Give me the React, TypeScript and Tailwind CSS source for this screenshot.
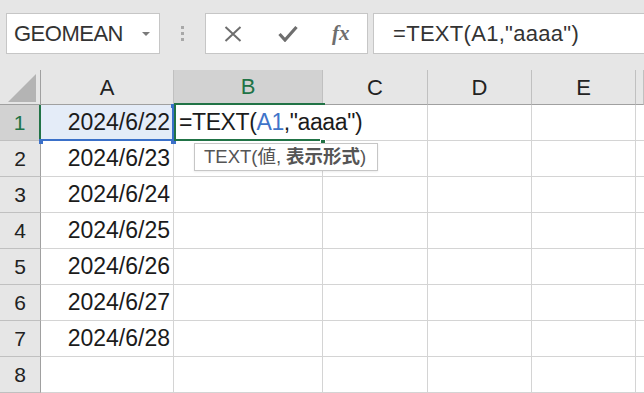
import React from 'react';

const DATES = ['2024/6/22', '2024/6/23', '2024/6/24', '2024/6/25', '2024/6/26', '2024/6/27', '2024/6/28', ''];
const COLS = ['A', 'B', 'C', 'D', 'E', ''];

const FONT = { fontFamily: '"Liberation Sans", "Noto Sans CJK JP", sans-serif' };

const App: React.FC = () => {
  return (
    <div className="w-[644px] h-[393px] overflow-hidden bg-white text-[#1b1b1b]" style={FONT}>
      {/* Formula bar */}
      <div className="h-[70px] bg-[#e6e6e6] flex items-start pt-[13px]">
        <div className="ml-[6px] w-[154px] h-[41px] bg-white border border-[#c6c6c6] flex items-center pl-[7px] pr-[9px]">
          <span className="text-[22px] text-[#333] tracking-[-0.5px] leading-none">GEOMEAN</span>
          <span className="ml-auto w-0 h-0 border-l-[4px] border-r-[4px] border-t-[4px] border-l-transparent border-r-transparent border-t-[#7a7a7a]"></span>
        </div>
        <div className="w-[45px] h-[41px] flex flex-col items-center justify-center gap-[3px]">
          <span className="w-[3px] h-[3px] bg-[#a8a8a8]"></span>
          <span className="w-[3px] h-[3px] bg-[#a8a8a8]"></span>
          <span className="w-[3px] h-[3px] bg-[#a8a8a8]"></span>
        </div>
        <div className="w-[163px] h-[41px] bg-white border border-[#c6c6c6] flex items-center">
          <svg className="ml-[18px]" width="18" height="16" viewBox="0 0 18 16">
            <path d="M1.5 1 L16.5 15 M16.5 1 L1.5 15" stroke="#6e6e6e" strokeWidth="2" fill="none" />
          </svg>
          <svg className="ml-[36px]" width="20" height="17" viewBox="0 0 20 17">
            <path d="M1.5 9 L7 15 L18.5 2" stroke="#6e6e6e" strokeWidth="3.2" fill="none" strokeLinejoin="miter" />
          </svg>
          <span className="ml-[34px] text-[21px] italic font-bold text-[#6e6e6e] leading-none" style={{ fontFamily: '"Liberation Serif", serif' }}>fx</span>
        </div>
        <div className="ml-[5px] flex-1 h-[41px] bg-white border-y border-l border-[#c6c6c6] flex items-center pl-[19px]">
          <span className="text-[22px] text-[#333] tracking-[0.3px] leading-none">=TEXT(A1,"aaaa")</span>
        </div>
      </div>

      {/* Sheet grid */}
      <div className="grid grid-cols-[41px_133px_149px_105px_104px_104px_1fr]">
        {/* header row */}
        <div className="h-[35px] bg-[#e6e6e6] border-r border-b border-[#a0a0a0] flex items-end justify-end pr-[3px] pb-[2px]">
          <svg width="29" height="28" viewBox="0 0 29 28">
            <path d="M0 28 L28 0 L28 28 Z" fill="#b4b4b4" />
          </svg>
        </div>
        {COLS.map((c, i) => (
          <div
            key={c + i}
            className={
              c === 'B'
                ? 'h-[35px] bg-[#d2d2d2] border-r border-r-[#c0c0c0] border-b-2 border-b-[#217346] flex items-center justify-center text-[22px] text-[#217346]'
                : 'h-[35px] bg-[#e6e6e6] border-r border-r-[#c0c0c0] border-b border-b-[#a0a0a0] flex items-center justify-center text-[22px] text-[#222]'
            }
          >
            {c}
          </div>
        ))}

        {/* rows */}
        {DATES.map((d, r) => (
          <React.Fragment key={r}>
            <div
              className={
                r === 0
                  ? 'h-[36px] bg-[#d2d2d2] border-r-2 border-r-[#217346] border-b border-b-[#c0c0c0] flex items-center justify-center text-[21px] text-[#217346]'
                  : 'h-[36px] bg-[#e6e6e6] border-r border-r-[#a0a0a0] border-b border-b-[#c0c0c0] flex items-center justify-center text-[21px] text-[#222]'
              }
            >
              {r + 1}
            </div>
            {/* column A */}
            <div
              className={
                r === 0
                  ? 'relative h-[36px] bg-[#e4ecf8] border-b border-r border-[#d4d4d4] flex items-center justify-end pr-[3px] text-[23px]'
                  : 'h-[36px] border-b border-r border-[#d4d4d4] flex items-center justify-end pr-[3px] text-[23px]'
              }
            >
              {d}
              {r === 0 && (
                <>
                  <div className="absolute left-0 right-[-1px] top-0 bottom-[-1px] border-r-2 border-b-2 border-[#3a70c9]"></div>
                  <div className="absolute right-[-2px] top-[-1px] w-[4px] h-[4px] bg-[#3a70c9]"></div>
                  <div className="absolute right-[-3px] bottom-[-4px] w-[5px] h-[5px] bg-[#3a70c9]"></div>
                  <div className="absolute left-[-2px] bottom-[-4px] w-[4px] h-[5px] bg-[#3a70c9]"></div>
                </>
              )}
            </div>
            {/* column B */}
            <div
              className={
                r === 0
                  ? 'relative z-10 h-[36px] bg-white border-b border-[#d4d4d4] flex items-center pl-[5px] text-[23px] whitespace-nowrap overflow-visible'
                  : 'h-[36px] border-b border-r border-[#d4d4d4]'
              }
            >
              {r === 0 && (
                <>
                  <span className="relative z-10 tracking-[-0.4px]">
                    =TEXT(<span className="text-[#3f74c9]">A1</span>,"aaaa")
                  </span>
                  <div className="absolute left-0 right-[-2px] top-[-2px] bottom-[-1px] border-t-2 border-l-2 border-b-2 border-[#217346]"></div>
                  <div className="absolute right-[-3px] bottom-[-4px] w-[6px] h-[5px] bg-[#217346] border border-white"></div>
                  <div className="absolute left-[20px] top-[38px] w-[184px] h-[28px] bg-white border border-[#c6c6c6] shadow-[0_1px_2px_rgba(0,0,0,0.08)] flex items-center pl-[9px] text-[18.5px] text-[#555] leading-none z-20">
                    TEXT(値, <span className="font-bold ml-[5px]">表示形式</span>)
                  </div>
                </>
              )}
            </div>
            <div className="h-[36px] border-b border-r border-[#d4d4d4]"></div>
            <div className="h-[36px] border-b border-r border-[#d4d4d4]"></div>
            <div className="h-[36px] border-b border-r border-[#d4d4d4]"></div>
            <div className="h-[36px] border-b border-[#d4d4d4]"></div>
          </React.Fragment>
        ))}
      </div>
    </div>
  );
};

export default App;
